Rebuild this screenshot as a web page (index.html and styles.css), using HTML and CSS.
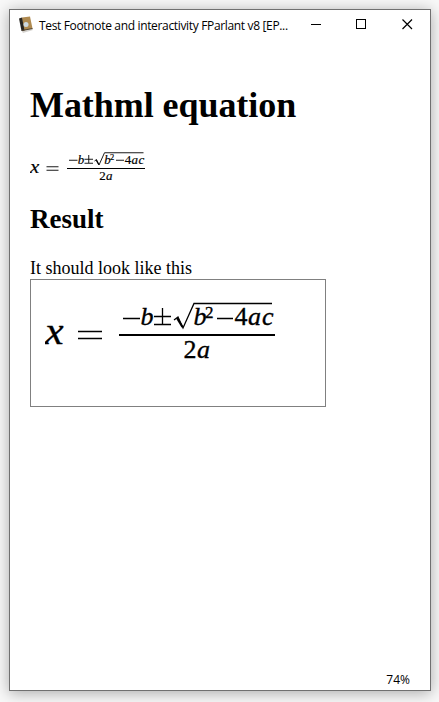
FILE: index.html
```
<!DOCTYPE html>
<html lang="en">
<head>
<meta charset="utf-8">
<title>Test Footnote and interactivity</title>
<link rel="stylesheet" href="styles.css">
</head>
<body>
<div class="window">
  <header class="titlebar">
    <svg class="book" width="16" height="18" viewBox="0 0 16 18">
      <path d="M3 14l11-2 1 2-10 3z" fill="#d5d3cf"/>
      <path d="M4 1.500l8-1 2.500 12L5 14.500z" fill="#af8a50"/>
      <path d="M1 2.500l3-1 2.500 13-3 .5z" fill="#272522"/>
      <path d="M4 14.500l10.500-2" stroke="#514330" stroke-width="1"/>
      <circle cx="8" cy="8.500" r="2.500" fill="#ced9e0"/>
    </svg>
    <span class="title">Test Footnote and interactivity FParlant v8 [EP...</span>
    <svg class="controls" width="102" height="12" viewBox="0 0 102 12" fill="none" stroke="#000">
      <path d="M0 5.500h10M45.500 .5h9v9h-9z" shape-rendering="crispEdges"/>
      <path d="M91.500 .5l9.500 9.500M101 .5L91.500 10" stroke-width="1.200"/>
    </svg>
  </header>
  <main class="page">
    <h1>Mathml equation</h1>
    <svg class="formula small" viewBox="0 0 232 62">
      <g id="quadratic">
        <g class="variable">
          <text class="lead" transform="translate(0 44) scale(1.1 1)">x</text>
          <text x="95.500" y="25">b</text>
          <text x="148.500" y="25">b</text>
          <text x="203" y="25">a</text>
          <text x="217" y="25">c</text>
          <text x="152" y="58">a</text>
        </g>
        <g class="number">
          <text class="power" x="160" y="18">2</text>
          <text x="189.500" y="25">4</text>
          <text x="138.500" y="58">2</text>
        </g>
        <path class="thin" d="M33 31.500h24M33 38.500h24M78 18.500h17M109 24.500h17M109 16.500h17M117.500 8v16M172 18.500h16"/>
        <path class="thin" d="M129 20l4-3 5 11 11-24.500h78"/>
        <path class="hook" d="M132 18l5.500 9"/>
        <path class="bar" d="M74 35h156"/>
      </g>
    </svg>
    <h2>Result</h2>
    <p>It should look like this</p>
    <div class="frame">
      <svg class="formula large" viewBox="0 0 232 62"><use href="#quadratic"/></svg>
    </div>
  </main>
  <footer class="zoom">74%</footer>
</div>
</body>
</html>
```

FILE: styles.css
```
* { box-sizing: border-box; }
body {
  margin: 0;
  width: 439px;
  height: 702px;
  padding: 9px 8px 11px 9px;
  overflow: hidden;
  background: #f8f8f8;
  color: #000;
}
.window {
  display: flex;
  flex-direction: column;
  width: 422px;
  height: 682px;
  border: 1px solid #707070;
  background: #fff;
  box-shadow: 0 2px 14px rgba(0, 0, 0, .32);
}
.titlebar {
  display: flex;
  align-items: center;
  height: 30px;
  padding-left: 8px;
  font: 12px "Open Sans", sans-serif;
}
.title {
  width: 272px;
  margin-left: 5px;
  white-space: nowrap;
  letter-spacing: -.34px;
}
.book, .controls { flex: none; }
.page {
  flex: 1;
  padding: 44px 20px 0;
  font: 18px/20px "Liberation Serif", serif;
}
h1, h2, p { margin: 0; }
h1 { font-size: 36px; line-height: 42px; letter-spacing: -.06px; }
h2 { margin-top: 21px; font-size: 27px; line-height: 32px; }
p { margin-top: 23px; }
.formula {
  display: block;
  font-family: "Liberation Serif", serif;
  font-size: 26px;
  stroke-width: .35px;
}
.formula text { stroke: #000; }
.small { --line: 1.8px; width: 116px; height: 31px; margin-top: 25px; }
.large { --line: 1.3px; width: 232px; height: 62px; }
.variable { font-style: italic; }
.lead { font-size: 38px; }
.power { font-size: 17px; }
.thin, .hook, .bar { fill: none; stroke: #000; }
.thin { stroke-width: var(--line); }
.hook { stroke-width: 2.2px; }
.bar { stroke-width: 2px; }
.frame {
  width: 296px;
  height: 128px;
  margin-top: 1px;
  padding: 20px 14px;
  border: 1px solid #808080;
}
.zoom {
  height: 20px;
  padding-right: 20px;
  text-align: right;
  font: 12px/20px "Open Sans", sans-serif;
}
```
